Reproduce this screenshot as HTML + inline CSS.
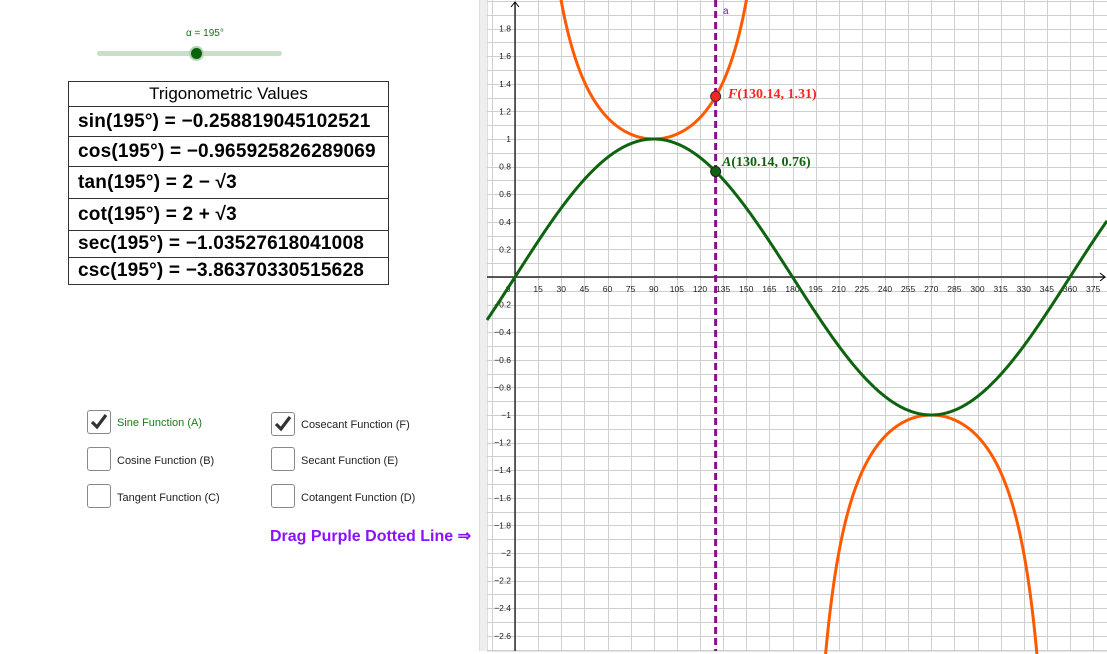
<!DOCTYPE html>
<html><head><meta charset="utf-8">
<style>
body{margin:0;width:1107px;height:654px;overflow:hidden;background:#fff;font-family:"Liberation Sans",sans-serif;position:relative}
.abs{position:absolute}
table{border-collapse:collapse;position:absolute;left:68px;top:81px;width:321px;table-layout:fixed}
td{border:1px solid #333;padding:0 0 0 9px;font-family:"Liberation Sans",sans-serif;font-weight:bold;font-size:19px;height:29px;white-space:nowrap;overflow:hidden;letter-spacing:0.2px}
td.h{font-weight:normal;text-align:center;font-size:17px;height:24px;padding:0;letter-spacing:0}
.cb{position:absolute;width:24px;height:24px;border:1.5px solid #888;border-radius:3px;background:#fff;box-sizing:border-box}
.lbl{position:absolute;font-size:11px;color:#222}
</style></head><body>
<div class="abs" style="left:186px;top:28px;font-size:10px;color:#1a6e1a">α = 195°</div>
<div class="abs" style="left:97px;top:51px;width:185px;height:5px;background:#c9dfc9;border-radius:3px"></div>
<div class="abs" style="left:189px;top:46px;width:15px;height:15px;border-radius:50%;background:#0b620b;border:2px solid #b6d3b6;box-sizing:border-box"></div>
<table>
<tr><td class="h">Trigonometric Values</td></tr>
<tr><td>sin(195°) = −0.258819045102521</td></tr>
<tr><td>cos(195°) = −0.965925826289069</td></tr>
<tr><td style="height:31px">tan(195°) = 2 − √3</td></tr>
<tr><td style="height:31px">cot(195°) = 2 + √3</td></tr>
<tr><td style="height:26px">sec(195°) = −1.03527618041008</td></tr>
<tr><td style="height:26px">csc(195°) = −3.86370330515628</td></tr>
</table>
<div class="cb" style="left:87px;top:410px"><svg width="21" height="21" style="position:absolute;left:0;top:0"><path d="M4 11 L9 16 L18 4" stroke="#333" stroke-width="3.2" fill="none"/></svg></div>
<div class="lbl" style="left:117px;top:417px;color:#1a7a1a">Sine Function (A)</div>
<div class="cb" style="left:87px;top:447px"></div>
<div class="lbl" style="left:117px;top:455px">Cosine Function (B)</div>
<div class="cb" style="left:87px;top:484px"></div>
<div class="lbl" style="left:117px;top:492px">Tangent Function (C)</div>
<div class="cb" style="left:271px;top:412px"><svg width="21" height="21" style="position:absolute;left:0;top:0"><path d="M4 11 L9 16 L18 4" stroke="#333" stroke-width="3.2" fill="none"/></svg></div>
<div class="lbl" style="left:301px;top:419px">Cosecant Function (F)</div>
<div class="cb" style="left:271px;top:447px"></div>
<div class="lbl" style="left:301px;top:455px">Secant Function (E)</div>
<div class="cb" style="left:271px;top:484px"></div>
<div class="lbl" style="left:301px;top:492px">Cotangent Function (D)</div>
<div class="abs" style="left:270px;top:526px;font-size:16px;font-weight:bold;color:#8b12ff">Drag Purple Dotted Line ⇒</div>
<div class="abs" style="left:479px;top:0;width:7px;height:651px;background:#eee;border-left:1px solid #ddd;border-right:1px solid #ddd"></div>
<svg id="g" class="abs" style="left:0;top:0" width="1107" height="654"></svg>
<script>
var s=document.getElementById('g'),ox=515,oy=277,px=555/360,py=138;
var h='';
for(var i=-2;i<30;i++){var x=Math.round(ox+i*15*px)+0.5;if(x>487&&x<1107)h+='<line x1="'+x+'" y1="0" x2="'+x+'" y2="651" stroke="#cfcfcf" stroke-width="1"/>';}
for(var j=-30;j<30;j++){var y=Math.round(oy-j*py/10)+0.5;if(y>0&&y<651)h+='<line x1="487" y1="'+y+'" x2="1107" y2="'+y+'" stroke="#cfcfcf" stroke-width="1"/>';}
h+='<line x1="487" y1="651" x2="1107" y2="651" stroke="#ccc"/>';
h+='<line x1="'+ox+'" y1="2" x2="'+ox+'" y2="651" stroke="#000" stroke-width="1.2"/><path d="M511 7 L515 2 L519 7" stroke="#000" fill="none"/>';
h+='<line x1="487" y1="'+oy+'" x2="1105" y2="'+oy+'" stroke="#000" stroke-width="1.2"/><path d="M1100 273 L1105 277 L1100 281" stroke="#000" fill="none"/>';
for(var i=1;i<=25;i++){var x=ox+i*15*px;h+='<text x="'+x+'" y="292" font-size="8.5" text-anchor="middle" fill="#222" font-family="Liberation Sans">'+(i*15)+'</text>';}
h+='<text x="508" y="292" font-size="8.5" text-anchor="middle" fill="#222" font-family="Liberation Sans">0</text>';
for(var j=-13;j<=9;j++){if(j==0)continue;var v=j/5,y=oy-v*py;var t=(Math.abs(v)%1==0?Math.abs(v).toFixed(0):Math.abs(v).toFixed(1));if(v<0)t='−'+t;h+='<text x="511" y="'+(y+3)+'" font-size="8.5" text-anchor="end" fill="#222" font-family="Liberation Sans">'+t+'</text>';}
function P(f,a,b){var d='',st=true;for(var x=a;x<=b;x+=0.5){var dg=(x-ox)/px,v=f(dg*Math.PI/180),y=oy-v*py;if(y<-20||y>680){st=true;continue;}d+=(st?'M':'L')+x.toFixed(1)+' '+y.toFixed(1);st=false;}return d;}
h+='<path d="'+P(function(r){return 1/Math.sin(r)},487,1107)+'" stroke="#ff5a00" stroke-width="3" fill="none"/>';
h+='<path d="'+P(Math.sin,487,1107)+'" stroke="#0e640e" stroke-width="3" fill="none"/>';
var lx=ox+130.14*px;
h+='<line x1="'+lx+'" y1="0" x2="'+lx+'" y2="651" stroke="#8a0f8a" stroke-width="3" stroke-dasharray="7,4"/>';
h+='<text x="723" y="14" font-size="10" fill="#8a0f8a" font-family="Liberation Sans">a</text>';
h+='<circle cx="'+lx+'" cy="'+(oy-1.3087*py)+'" r="5" fill="#f22" stroke="#333"/>';
h+='<circle cx="'+lx+'" cy="'+(oy-0.7641*py)+'" r="5" fill="#0e640e" stroke="#222"/>';
h+='<text x="728" y="98" font-size="14" fill="#f22" font-family="Liberation Serif" font-weight="bold"><tspan font-style="italic">F</tspan>(130.14, 1.31)</text>';
h+='<text x="722" y="166" font-size="14" fill="#0e640e" font-family="Liberation Serif" font-weight="bold"><tspan font-style="italic">A</tspan>(130.14, 0.76)</text>';
s.innerHTML=h;
</script>
</body></html>
